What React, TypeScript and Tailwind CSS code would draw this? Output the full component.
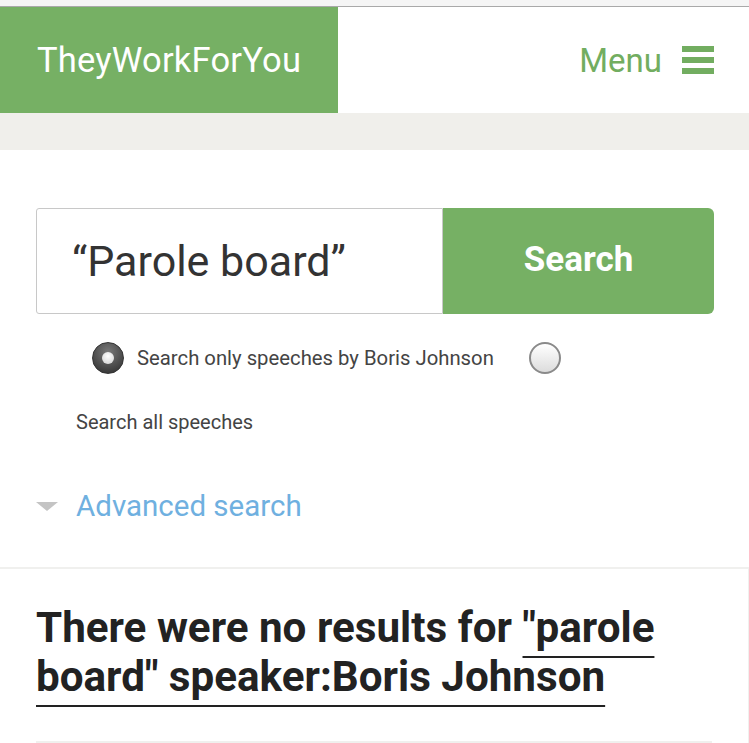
import React from 'react'

const font = { fontFamily: 'Roboto, "Noto Sans", sans-serif' }

function Radio({ checked }: { checked?: boolean }) {
  if (checked) {
    return (
      <span className="flex h-[32px] w-[32px] shrink-0 items-center justify-center rounded-full border border-[#333] bg-[radial-gradient(circle_at_50%_30%,#7a7a7a,#2a2a2a)]">
        <span className="h-[12px] w-[12px] rounded-full bg-[radial-gradient(circle_at_50%_35%,#ffffff,#cfcfcf)]" />
      </span>
    )
  }
  return (
    <span className="block h-[32px] w-[32px] shrink-0 rounded-full border-2 border-[#8a8a8a] bg-[linear-gradient(180deg,#ffffff,#dcdcdc)]" />
  )
}

export default function App() {
  return (
    <div className="w-[749px] h-[743px] overflow-hidden bg-white" style={font}>
      {/* browser strip */}
      <div className="h-[7px] bg-[#f5f5f5] border-b border-[#a9a9a9]" />

      {/* header */}
      <header className="flex h-[106px]">
        <div className="flex w-[338px] items-center bg-[#76b064] pl-[37px]">
          <span className="text-[34.5px] leading-none tracking-[0.2px] text-white">TheyWorkForYou</span>
        </div>
        <div className="flex flex-1 items-center justify-end pr-[35px]">
          <span className="text-[33px] leading-none text-[#72ad60]">Menu</span>
          <span className="ml-[20px] flex w-[32px] flex-col gap-[5px]">
            <span className="h-[6px] bg-[#72ad60]" />
            <span className="h-[6px] bg-[#72ad60]" />
            <span className="h-[6px] bg-[#72ad60]" />
          </span>
        </div>
      </header>
      <div className="h-[37px] bg-[#f0efeb]" />

      {/* search */}
      <section className="px-[36px] pt-[58px]">
        <div className="flex h-[106px] w-[678px]">
          <div className="flex w-[407px] items-center rounded-l-[3px] border border-[#c8c8c8] pl-[35px]">
            <span className="text-[43px] leading-none text-[#333]">“Parole board”</span>
          </div>
          <button className="flex flex-1 items-center justify-center rounded-r-[6px] bg-[#76b064] pb-[2px] text-[35px] font-bold text-white">
            Search
          </button>
        </div>

        <div className="mt-[28px] flex items-center pl-[56px]">
          <Radio checked />
          <span className="ml-[13px] text-[20.3px] text-[#444]">Search only speeches by Boris Johnson</span>
          <span className="ml-[35px]">
            <Radio />
          </span>
        </div>

        <div className="mt-[33px] pl-[40px] text-[20px] text-[#444]">Search all speeches</div>

        <div className="mt-[55px] flex items-center">
          <span className="h-0 w-0 border-x-[11px] border-t-[9px] border-x-transparent border-t-[#c4c4c4]" />
          <span className="ml-[18px] text-[29.5px] leading-none text-[#6fb0e0]">Advanced search</span>
        </div>
      </section>

      {/* results */}
      <section className="mt-[45px] border-t-2 border-r border-[#f0f0ee] pl-[36px] pr-[36px] pt-[34px]">
        <h1 className="text-[42.2px] font-bold leading-[49px] text-[#222]">
          There were no results for{' '}
          <a className="underline decoration-2 underline-offset-[14px] decoration-[#222]">
            "parole board" speaker:Boris Johnson
          </a>
        </h1>
        <div className="mt-[40px] h-[2px] bg-[#f0f0ee]" />
      </section>
    </div>
  )
}
